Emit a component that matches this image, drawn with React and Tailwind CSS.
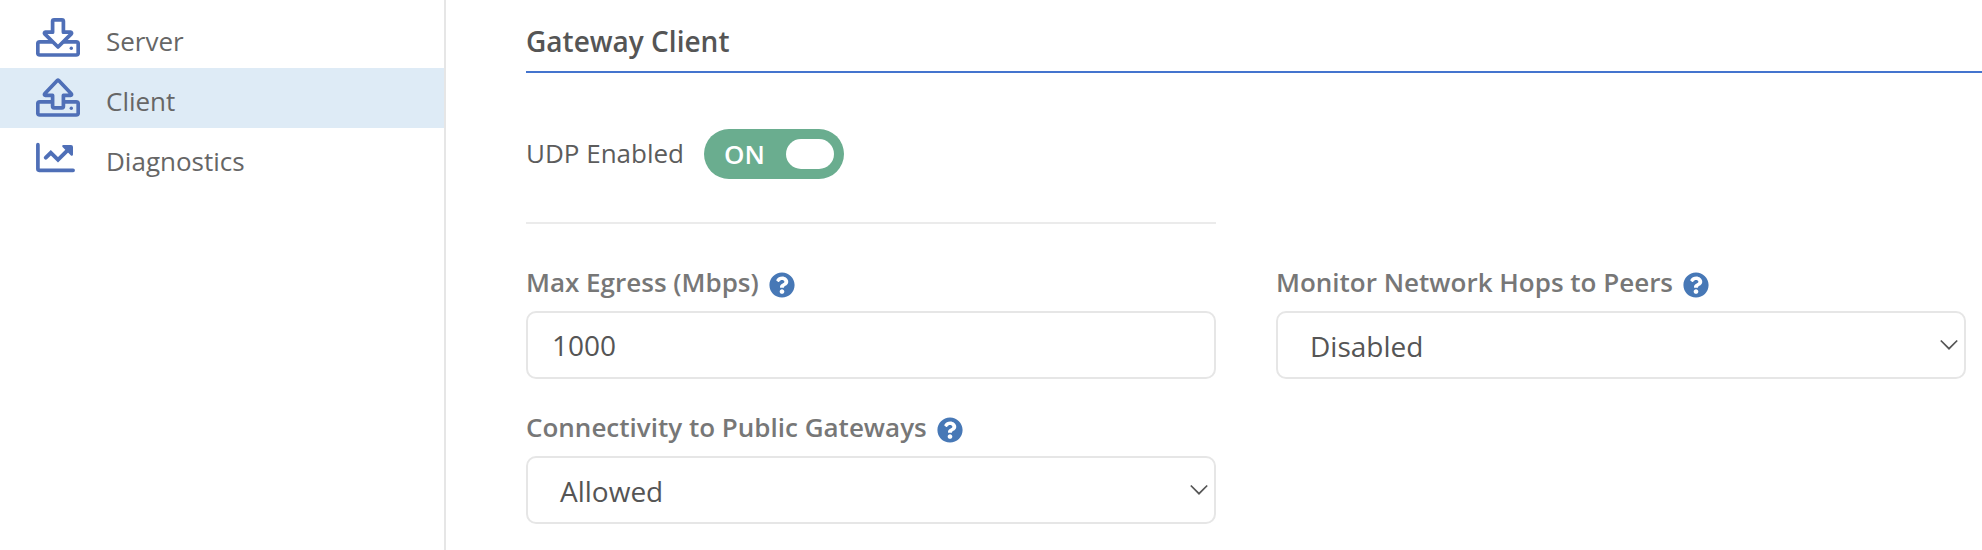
import React from 'react';
import { FaQuestionCircle } from 'react-icons/fa';

function DownloadDriveIcon() {
  return (
    <svg width="44" height="40" viewBox="0 0 44 40" fill="none" stroke="#4f6fb7" strokeWidth="3.7" strokeLinejoin="round" strokeLinecap="butt">
      <path d="M16.2 24.8H3.8a2 2 0 0 0-2 2V36a2 2 0 0 0 2 2h36.4a2 2 0 0 0 2-2v-9.2a2 2 0 0 0-2-2H27.8" />
      <path d="M16.6 15.2V4.3a1.5 1.5 0 0 1 1.5-1.5h7.8a1.5 1.5 0 0 1 1.5 1.5v10.9h7.2a1 1 0 0 1 .7 1.7L22 30 8.7 16.9a1 1 0 0 1 .7-1.7z" />
      <circle cx="35.3" cy="31.3" r="1.7" fill="#4f6fb7" stroke="none" />
    </svg>
  );
}

function UploadDriveIcon() {
  return (
    <svg width="44" height="40" viewBox="0 0 44 40" fill="none" stroke="#4f6fb7" strokeWidth="3.7" strokeLinejoin="round" strokeLinecap="butt">
      <path d="M16.2 24.8H3.8a2 2 0 0 0-2 2V36a2 2 0 0 0 2 2h36.4a2 2 0 0 0 2-2v-9.2a2 2 0 0 0-2-2H27.8" />
      <path d="M16.6 18.4v10.9a1.5 1.5 0 0 0 1.5 1.5h7.8a1.5 1.5 0 0 0 1.5-1.5V18.4h7.2a1 1 0 0 0 .7-1.7L22.7 3.5a1 1 0 0 0-1.4 0L8.7 16.7a1 1 0 0 0 .7 1.7z" />
      <circle cx="35.3" cy="31.3" r="1.7" fill="#4f6fb7" stroke="none" />
    </svg>
  );
}

function ChartIcon() {
  return (
    <svg width="44" height="40" viewBox="0 0 44 40" fill="none" stroke="#4f6fb7" strokeWidth="3.7" strokeLinejoin="round" strokeLinecap="round">
      <path d="M1.9 7.7v24.4a1.2 1.2 0 0 0 1.2 1.2h34" />
      <path d="M9.8 20.6l5-4.9L22 22.8l9.5-9.4" strokeLinejoin="miter" strokeWidth="4" />
      <path d="M27.4 9.2h7.6a.8.8 0 0 1 .8.8v7.6z" fill="#4f6fb7" strokeWidth="2.4" />
    </svg>
  );
}

function NavItem({ icon, label, active }) {
  return (
    <li className={active ? 'flex h-[60px] bg-[#deebf6] pl-9' : 'flex h-[60px] pl-9'}>
      <span className="flex w-[70px] shrink-0 pt-[9px]">{icon}</span>
      <span className="pt-[13px] text-[26px] leading-[40px] text-[#666666]">{label}</span>
    </li>
  );
}

function FieldLabel({ children }) {
  return (
    <div className="flex h-9 items-center gap-[10px] text-[26px] font-semibold leading-9 text-[#777777]">
      <span>{children}</span>
      <FaQuestionCircle className="mt-[5px] size-[26px] text-[#4778b6]" />
    </div>
  );
}

function SelectBox({ value }) {
  return (
    <div className="mt-[11px] flex h-[68px] items-center justify-between rounded-[10px] border-2 border-[#e6e6e6] pl-8 pr-[5px] text-[28px] text-[#555555]">
      <span className="pt-[2px] leading-10">{value}</span>
      <svg width="20" height="12" viewBox="0 0 20 12" fill="none" stroke="#555555" strokeWidth="1.7">
        <path d="M1.8 1.5L10 9.7l8.2-8.2" />
      </svg>
    </div>
  );
}

export default function App() {
  return (
    <div className="flex h-[550px] w-[1982px] overflow-hidden bg-white font-['Open_Sans',sans-serif]">
      <nav className="w-[446px] shrink-0 border-r-2 border-[#e6e6e6] pt-2">
        <ul>
          <NavItem icon={<DownloadDriveIcon />} label="Server" />
          <NavItem icon={<UploadDriveIcon />} label="Client" active />
          <NavItem icon={<ChartIcon />} label="Diagnostics" />
        </ul>
      </nav>
      <main className="flex-1 pl-20">
        <h1 className="h-[73px] border-b-2 border-[#4474ce] pt-[21px] text-[28px] font-semibold leading-10 text-[#555555]">Gateway Client</h1>
        <div className="mt-14 flex h-[50px] items-center gap-5 text-[26px] text-[#5c5c5c]">
          <span className="pb-[2px] leading-10">UDP Enabled</span>
          <button className="flex h-[50px] w-[140px] items-center justify-between rounded-full bg-[#6aad8f] pl-5 pr-[10px] font-semibold text-white">
            <span>ON</span>
            <span className="h-[30px] w-12 rounded-full bg-white" />
          </button>
        </div>
        <div className="mt-[43px] h-[2px] w-[690px] bg-[#ebebeb]" />
        <div className="mt-10 grid grid-cols-[690px_690px] gap-x-[60px] gap-y-[30px]">
          <div>
            <FieldLabel>Max Egress (Mbps)</FieldLabel>
            <div className="mt-[11px] flex h-[68px] items-center rounded-[10px] border-2 border-[#e6e6e6] pl-6 text-[28px] text-[#555555]">1000</div>
          </div>
          <div>
            <FieldLabel>Monitor Network Hops to Peers</FieldLabel>
            <SelectBox value="Disabled" />
          </div>
          <div>
            <FieldLabel>Connectivity to Public Gateways</FieldLabel>
            <SelectBox value="Allowed" />
          </div>
        </div>
      </main>
    </div>
  );
}
